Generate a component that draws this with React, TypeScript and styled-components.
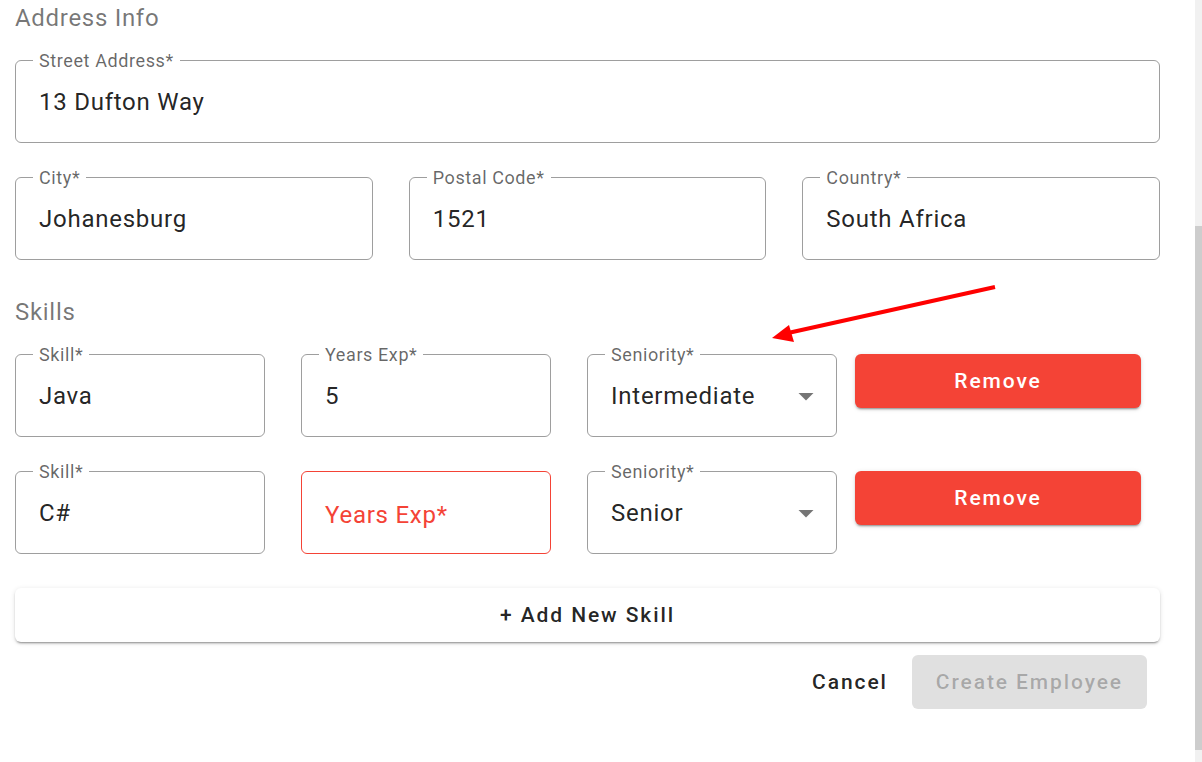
import React from 'react';
import styled, { createGlobalStyle } from 'styled-components';

const GlobalStyle = createGlobalStyle`
  html, body {
    margin: 0;
    padding: 0;
    background: #ffffff;
    font-family: Roboto, "Liberation Sans", Arial, sans-serif;
  }
`;

const Page = styled.div`
  position: relative;
  display: flex;
  width: 1202px;
  height: 762px;
  overflow: hidden;
  background: #ffffff;
`;

const Content = styled.div`
  flex: 1;
  padding: 0 35px 0 15px;
`;

const Scrollbar = styled.div`
  width: 7px;
  display: flex;
  flex-direction: column;
  background: #f1f1f1;
  padding: 226px 0 12px;
`;

const Thumb = styled.div`
  flex: 1;
  background: #cdcdcd;
`;

const SectionTitle = styled.h3<{ $top?: number; $bottom?: number }>`
  margin: ${({ $top = 0 }) => $top}px 0 ${({ $bottom = 24 }) => $bottom}px;
  font-size: 24px;
  line-height: 36px;
  font-weight: 400;
  color: rgba(0, 0, 0, 0.54);
  letter-spacing: 0.7px;
`;

const Row = styled.div`
  display: flex;
  gap: 36px;
  margin-bottom: 34px;
`;

const FieldGroup = styled.div`
  display: flex;
  gap: 36px;
`;

const Field = styled.div<{ $width?: number; $error?: boolean }>`
  position: relative;
  box-sizing: border-box;
  flex: ${({ $width }) => ($width ? `0 0 ${$width}px` : '1')};
  height: 83px;
  border: 1px solid ${({ $error }) => ($error ? '#f44336' : 'rgba(0, 0, 0, 0.38)')};
  border-radius: 6px;
  display: flex;
  align-items: center;
  padding: 0 23px;
`;

const Label = styled.span`
  position: absolute;
  top: -10px;
  left: 17px;
  padding: 0 6px;
  background: #ffffff;
  font-size: 18px;
  line-height: 20px;
  color: rgba(0, 0, 0, 0.6);
  letter-spacing: 0.6px;
`;

const Value = styled.span<{ $error?: boolean }>`
  flex: 1;
  font-size: 24px;
  letter-spacing: 0.75px;
  color: ${({ $error }) => ($error ? '#f44336' : 'rgba(0, 0, 0, 0.87)')};
  margin-top: ${({ $error }) => ($error ? 4 : 0)}px;
`;

const Caret = styled.svg`
  width: 36px;
  height: 36px;
  margin-right: -11px;
  fill: rgba(0, 0, 0, 0.54);
`;

const RemoveButton = styled.button`
  flex: 0 0 286px;
  height: 54px;
  margin-left: -18px;
  border: none;
  border-radius: 6px;
  background: #f44336;
  color: #ffffff;
  font-family: inherit;
  font-size: 21px;
  font-weight: 500;
  letter-spacing: 1.9px;
  box-shadow: 0px 3px 1px -2px rgba(0, 0, 0, 0.2), 0px 2px 2px 0px rgba(0, 0, 0, 0.14),
    0px 1px 5px 0px rgba(0, 0, 0, 0.12);
`;

const AddButton = styled.button`
  display: block;
  width: 100%;
  height: 54px;
  border: none;
  border-radius: 6px;
  background: #ffffff;
  color: rgba(0, 0, 0, 0.87);
  font-family: inherit;
  font-size: 21px;
  font-weight: 500;
  letter-spacing: 1.9px;
  box-shadow: 0px 3px 1px -2px rgba(0, 0, 0, 0.2), 0px 2px 2px 0px rgba(0, 0, 0, 0.14),
    0px 1px 5px 0px rgba(0, 0, 0, 0.12);
`;

const Actions = styled.div`
  display: flex;
  justify-content: flex-end;
  align-items: center;
  gap: 12px;
  padding: 13px 13px 0 0;
`;

const ActionButton = styled.button<{ $variant?: 'text' | 'disabled' }>`
  height: 54px;
  border: none;
  border-radius: 6px;
  font-family: inherit;
  font-size: 21px;
  font-weight: 500;
  letter-spacing: 1.9px;
  padding: ${({ $variant }) => ($variant === 'disabled' ? '0 24px' : '0 12px')};
  background: ${({ $variant }) => ($variant === 'disabled' ? '#e0e0e0' : 'transparent')};
  color: ${({ $variant }) => ($variant === 'disabled' ? 'rgba(0, 0, 0, 0.26)' : 'rgba(0, 0, 0, 0.87)')};
`;

const ArrowOverlay = styled.svg`
  position: absolute;
  left: 0;
  top: 0;
  width: 1202px;
  height: 762px;
  pointer-events: none;
`;

type FieldProps = {
  label?: string;
  value: string;
  width?: number;
  error?: boolean;
  select?: boolean;
};

const TextField = ({ label, value, width, error, select }: FieldProps) => (
  <Field $width={width} $error={error}>
    {label && <Label>{label}</Label>}
    <Value $error={error}>{value}</Value>
    {select && (
      <Caret viewBox="0 0 24 24">
        <path d="M7 10l5 5 5-5z" />
      </Caret>
    )}
  </Field>
);

const skills = [
  { skill: 'Java', years: '5', seniority: 'Intermediate' },
  { skill: 'C#', years: '', seniority: 'Senior' },
];

export default function App() {
  return (
    <>
      <GlobalStyle />
      <Page>
        <Content>
          <SectionTitle>Address Info</SectionTitle>
          <Row>
            <TextField label="Street Address*" value="13 Dufton Way" />
          </Row>
          <Row>
            <TextField label="City*" value="Johanesburg" />
            <TextField label="Postal Code*" value="1521" />
            <TextField label="Country*" value="South Africa" />
          </Row>

          <SectionTitle $top={33} $bottom={24}>
            Skills
          </SectionTitle>
          {skills.map((s, i) => (
            <Row key={i}>
              <FieldGroup>
                <TextField label="Skill*" value={s.skill} width={250} />
                {s.years ? (
                  <TextField label="Years Exp*" value={s.years} width={250} />
                ) : (
                  <TextField value="Years Exp*" width={250} error />
                )}
                <TextField label="Seniority*" value={s.seniority} width={250} select />
              </FieldGroup>
              <RemoveButton>Remove</RemoveButton>
            </Row>
          ))}

          <AddButton>+ Add New Skill</AddButton>
          <Actions>
            <ActionButton $variant="text">Cancel</ActionButton>
            <ActionButton $variant="disabled">Create Employee</ActionButton>
          </Actions>
        </Content>
        <Scrollbar>
          <Thumb />
        </Scrollbar>
        <ArrowOverlay viewBox="0 0 1202 762">
          <line x1="995" y1="287" x2="788" y2="333" stroke="#ff0000" strokeWidth="4" />
          <polygon points="772,338 789,325 794,342" fill="#ff0000" />
        </ArrowOverlay>
      </Page>
    </>
  );
}
